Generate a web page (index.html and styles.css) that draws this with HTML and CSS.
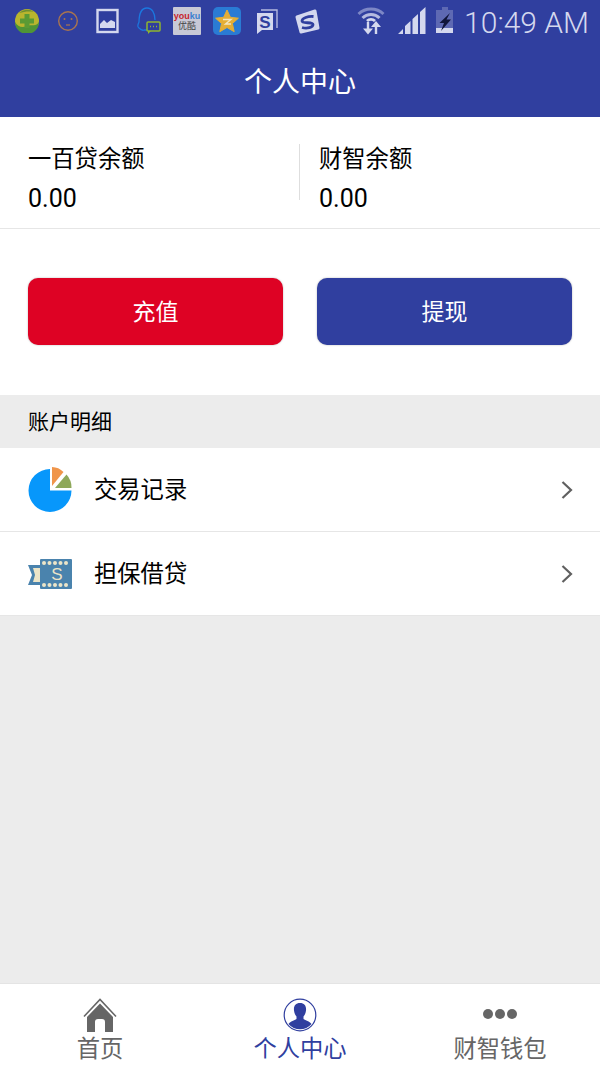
FILE: index.html
```html
<!DOCTYPE html>
<html lang="zh">
<head>
  <meta charset="UTF-8">
  <title>个人中心</title>
  <link rel="stylesheet" href="styles.css">
</head>
<body>
<div class="page">

  <!-- status bar -->
  <div class="status">
    <svg class="st st-guard" width="24" height="24" viewBox="0 0 24 24">
      <circle cx="12" cy="12" r="12" fill="#b9b52e"/>
      <path d="M0 13a12 12 0 0 0 24 0c-3 5-7 2-12 4S3 18 0 13z" fill="#4f9436"/>
      <path d="M4 4a12 12 0 0 1 15-1C13 2 9 3 4 4z" fill="#6f8f30"/>
      <path d="M9.500 5h5v4.500H19v5h-4.500V19h-5v-4.500H5v-5h4.500z" fill="#5a9a34"/>
    </svg>
    <svg class="st st-face" width="22" height="22" viewBox="0 0 22 22">
      <circle cx="11" cy="11" r="9.300" fill="none" stroke="#a9744f" stroke-width="1.400"/>
      <circle cx="7.500" cy="9" r="1" fill="#a9744f"/>
      <circle cx="14.500" cy="9" r="1" fill="#a9744f"/>
      <path d="M9 15h4" stroke="#a9744f" stroke-width="1.200"/>
    </svg>
    <svg class="st st-photo" width="24" height="26" viewBox="0 0 24 26">
      <rect x="1.500" y="2" width="20" height="22" fill="#2f3e9e" stroke="#d4d8ee" stroke-width="2.400"/>
      <path d="M4 20v-4l4-4 3 3 4-3 4 2v6z" fill="#d4d8ee"/>
    </svg>
    <svg class="st st-qq" width="26" height="30" viewBox="0 0 26 30">
      <path d="M3 22c-2-1-1-4 0-6 0-9 3-14 8-14s8 5 8 12M8 24c-2 1-3 0-5-2M8 24h3" fill="none" stroke="#1b78e0" stroke-width="1.300"/>
      <rect x="11" y="16" width="13" height="9" rx="1" fill="#2f3e9e" stroke="#8fb52f" stroke-width="1.500"/>
      <path d="M14 20.500h1M17 20.500h1M20 20.500h1" stroke="#8fb52f" stroke-width="1.400"/>
      <path d="M12 25v3l3-3z" fill="#8fb52f"/>
    </svg>
    <div class="youku"><span class="yk"><b>you</b><i>ku</i></span><span class="yk-cn">优酷</span></div>
    <svg class="st st-star" width="28" height="28" viewBox="0 0 28 28">
      <rect width="28" height="28" rx="5" fill="#2a7bd4"/>
      <path d="M14 3l3.400 7.300 8 .900-6 5.300 1.800 8.200-7.200-4.200-7.200 4.200 1.800-8.200-6-5.300 8-.9z" fill="#e4ae36" stroke="#e4ae36" stroke-linejoin="round"/>
      <path d="M10 12.500h8l-5.500 4.500H18" fill="none" stroke="#f3e6c0" stroke-width="1.400"/>
    </svg>
    <svg class="st st-sogou" width="22" height="26" viewBox="0 0 22 26">
      <path d="M5 2h16v18" fill="none" stroke="#b4bae0" stroke-width="1.400"/>
      <path d="M1 5h16v17H6l-5 4z" fill="#d4d8ee"/>
      <text x="9" y="19.500" class="st-s">S</text>
    </svg>
    <svg class="st st-sogou2" width="26" height="26" viewBox="0 0 26 26">
      <path d="M2 8l18-6 3 17-17 4z" fill="#d4d8ee" stroke="#d4d8ee" stroke-width="3" stroke-linejoin="round"/>
      <path d="M18.500 7.500C13 7 7 9 7 12s11 .500 11 3.500-6 4.500-11 3" fill="none" stroke="#2f3e9e" stroke-width="2.800"/>
    </svg>
    <svg class="st st-wifi" width="28" height="30" viewBox="0 0 28 30">
      <path d="M1.500 9a18 18 0 0 1 25 0" fill="none" stroke="#7d87c6" stroke-width="3"/>
      <path d="M5.500 13a12 12 0 0 1 17 0" fill="none" stroke="#b4bae0" stroke-width="3"/>
      <path d="M10 16a6 6 0 0 1 8 0" fill="none" stroke="#d4d8ee" stroke-width="3"/>
      <path d="M11 17v8M19 29v-9" fill="none" stroke="#d4d8ee" stroke-width="2.400"/>
      <path d="M6 23.500h10L11 29.500zM14 22l5-6 5 6z" fill="#d4d8ee"/>
    </svg>
    <svg class="st st-signal" width="28" height="28" viewBox="0 0 28 28">
      <path d="M0 27l5-5v5zM7 27v-8l5.500-5v13zM14.500 27V12L20 7v20zM22 27V5l5.500-5v27z" fill="#d4d8ee"/>
    </svg>
    <svg class="st st-battery" width="18" height="28" viewBox="0 0 18 28">
      <path d="M6 0h6v3h5v23H0V3h6z" fill="#5e69b3"/>
      <rect y="21" width="17" height="5" fill="#d4d8ee"/>
      <path d="M14 6L3.500 16H8L5 24l10-11.500h-4.500z" fill="#10153a"/>
    </svg>
    <span class="clock">10:49 AM</span>
  </div>

  <div class="header">个人中心</div>

  <div class="balances">
    <div class="balance">
      <div class="balance-name">一百贷余额</div>
      <div class="balance-num">0.00</div>
    </div>
    <div class="balance balance-right">
      <div class="balance-name">财智余额</div>
      <div class="balance-num">0.00</div>
    </div>
  </div>

  <div class="actions">
    <div class="btn btn-red">充值</div>
    <div class="btn btn-blue">提现</div>
  </div>

  <div class="section-title">账户明细</div>

  <div class="row">
    <svg class="row-icon" width="46" height="46" viewBox="0 0 46 46">
      <path d="M22 2a21.500 21.500 0 1 0 21.500 21.500H22z" fill="#0797fb"/>
      <path d="M24 0a17 17 0 0 1 11.500 5L24 19z" fill="#f0954a"/>
      <path d="M38.500 7.500a19 19 0 0 1 5 13.500H27z" fill="#8ea85a"/>
    </svg>
    <span class="row-text">交易记录</span>
    <svg class="chevron" width="14" height="20" viewBox="0 0 14 20"><path d="M2.500 2l8.500 8-8.500 8" fill="none" stroke="#606060" stroke-width="2.200"/></svg>
  </div>
  <div class="row">
    <svg class="row-icon" width="46" height="32" viewBox="0 0 46 32">
      <path d="M0 7h14v20H0l4-10z" fill="#4a83ad"/>
      <path d="M5 10h9v14H5l2-7z" fill="#ece5c8"/>
      <rect x="12" y="1" width="32" height="30" rx="1" fill="#4a83ad"/>
      <g fill="#ece5c8">
        <circle cx="16" cy="5" r="2"/><circle cx="21.500" cy="5" r="2"/><circle cx="27" cy="5" r="2"/><circle cx="32.500" cy="5" r="2"/><circle cx="38" cy="5" r="2"/>
        <circle cx="16" cy="27" r="2"/><circle cx="21.500" cy="27" r="2"/><circle cx="27" cy="27" r="2"/><circle cx="32.500" cy="27" r="2"/><circle cx="38" cy="27" r="2"/>
      </g>
      <text x="29" y="22" class="ticket-s">S</text>
    </svg>
    <span class="row-text">担保借贷</span>
    <svg class="chevron" width="14" height="20" viewBox="0 0 14 20"><path d="M2.500 2l8.500 8-8.500 8" fill="none" stroke="#606060" stroke-width="2.200"/></svg>
  </div>

  <div class="filler"></div>

  <div class="tabs">
    <div class="tab">
      <svg class="tab-icon" width="34" height="34" viewBox="0 0 34 34">
        <path d="M1 18.500L17 1.500l16 17" fill="none" stroke="#666" stroke-width="1.600"/>
        <path d="M4 19L17 5.500 30 19v15h-8V24a3 3 0 0 0-3-3h-4a3 3 0 0 0-3 3v10H4z" fill="#666"/>
      </svg>
      <span>首页</span>
    </div>
    <div class="tab tab-on">
      <svg class="tab-icon" width="34" height="34" viewBox="0 0 34 34">
        <circle cx="17" cy="17" r="15.800" fill="#fff" stroke="#303f9f" stroke-width="1.200"/>
        <path d="M17 5c4.500 0 6.500 3 6 7.500-.3 2.800-1.500 5-2.500 6v2.500c2 1.500 6 2 8 5a15 15 0 0 1-23 0c2-3 6-3.500 8-5v-2.500c-1-1-2.200-3.200-2.500-6C10.500 8 12.500 5 17 5z" fill="#303f9f"/>
      </svg>
      <span>个人中心</span>
    </div>
    <div class="tab">
      <svg class="tab-icon" width="34" height="34" viewBox="0 0 34 34">
        <circle cx="5" cy="16" r="5" fill="#666"/><circle cx="17" cy="16" r="5" fill="#666"/><circle cx="29" cy="16" r="5" fill="#666"/>
      </svg>
      <span>财智钱包</span>
    </div>
  </div>

</div>
</body>
</html>
```

FILE: styles.css
```css
* {
  box-sizing: border-box;
}
body {
  margin: 0;
  font-family: "Roboto", "Noto Sans CJK SC", sans-serif;
  background-color: #ececec;
}
.page {
  width: 600px;
  height: 1067px;
  display: flex;
  flex-direction: column;
  overflow: hidden;
}

/* status bar */
.status {
  height: 45px;
  flex: none;
  display: flex;
  align-items: center;
  padding-right: 11px;
  background-color: #303f9f;
  color: #d4d8ee;
}
.st {
  flex: none;
  margin-bottom: 3px;
}
.st-guard { margin-left: 15px; }
.st-face { margin-left: 18px; }
.st-photo { margin-left: 17px; }
.st-qq { margin-left: 16px; margin-bottom: 4px; }
.st-star { margin-left: 12px; }
.st-sogou { margin-left: 15px; }
.st-sogou2 { margin-left: 17px; margin-bottom: 1px; }
.st-wifi { margin-left: 36px; margin-bottom: 5px; }
.st-signal { margin-left: 13px; }
.st-battery { margin-left: 10px; }
.st-s {
  font-family: "Liberation Sans", sans-serif;
  font-size: 17px;
  font-weight: bold;
  fill: #2f3e9e;
  text-anchor: middle;
}
.youku {
  width: 28px;
  height: 28px;
  margin-left: 11px;
  margin-bottom: 3px;
  flex: none;
  background-color: #c8c9d6;
  border-radius: 1px;
  display: flex;
  flex-direction: column;
  align-items: center;
  line-height: 1;
  padding-top: 5px;
}
.yk {
  font-family: "Liberation Sans", sans-serif;
  font-size: 9px;
  color: #c8242c;
}
.yk b {
  font-weight: bold;
}
.yk i {
  font-style: normal;
  color: #3a7fd0;
  font-weight: bold;
}
.yk-cn {
  font-size: 9px;
  color: #444;
  margin-top: 1px;
}
.clock {
  font-family: "Roboto", sans-serif;
  font-size: 30px;
  font-weight: 300;
  margin-left: auto;
  white-space: nowrap;
}

.header {
  height: 72px;
  flex: none;
  background-color: #303f9f;
  color: white;
  font-size: 28px;
  display: flex;
  align-items: center;
  justify-content: center;
  padding-bottom: 2px;
}

/* balances */
.balances {
  height: 112px;
  flex: none;
  display: flex;
  background-color: white;
  border-bottom: 1px solid #e6e6e6;
  padding-top: 27px;
}
.balance {
  width: 299px;
  height: 56px;
  padding-left: 28px;
  color: black;
}
.balance-right {
  border-left: 1px solid #dedede;
  padding-left: 19px;
}
.balance-name {
  font-size: 23.300px;
  line-height: 30px;
}
.balance-num {
  font-size: 25px;
  line-height: 30px;
  margin-top: 10px;
}

.actions {
  height: 166px;
  flex: none;
  background-color: white;
  display: flex;
  gap: 34px;
  padding: 49px 28px 0;
}
.btn {
  width: 255px;
  height: 67px;
  padding-bottom: 4px;
  border-radius: 10px;
  color: white;
  font-size: 23px;
  display: flex;
  align-items: center;
  justify-content: center;
  box-shadow: 0 0 2px rgba(0,0,0,0.3);
}
.btn-red {
  background-color: #de0224;
}
.btn-blue {
  background-color: #303f9f;
}

.section-title {
  height: 53px;
  flex: none;
  padding-left: 28px;
  padding-bottom: 3px;
  font-size: 21px;
  color: black;
  display: flex;
  align-items: center;
  background-color: #ececec;
}

.row {
  height: 84px;
  flex: none;
  background-color: white;
  border-bottom: 1px solid #e6e6e6;
  display: flex;
  align-items: center;
  padding-left: 28px;
  padding-right: 26px;
}
.row-icon {
  flex: none;
  margin-right: 20px;
}
.row-text {
  font-size: 23.300px;
  color: black;
  flex: 1;
  padding-bottom: 3px;
}
.ticket-s {
  font-family: "Liberation Sans", sans-serif;
  font-size: 17px;
  fill: #ece5c8;
  text-anchor: middle;
}
.filler {
  flex: 1;
}

/* bottom tabs */
.tabs {
  height: 84px;
  flex: none;
  display: flex;
  background-color: white;
  border-top: 1px solid #e4e4e4;
}
.tab {
  width: 200px;
  display: flex;
  flex-direction: column;
  align-items: center;
  padding-top: 14px;
  font-size: 23.300px;
  line-height: 30px;
  color: #666;
}
.tab-icon {
  display: block;
  flex: none;
  margin-bottom: 2px;
}
.tab-on {
  color: #303f9f;
}
```
